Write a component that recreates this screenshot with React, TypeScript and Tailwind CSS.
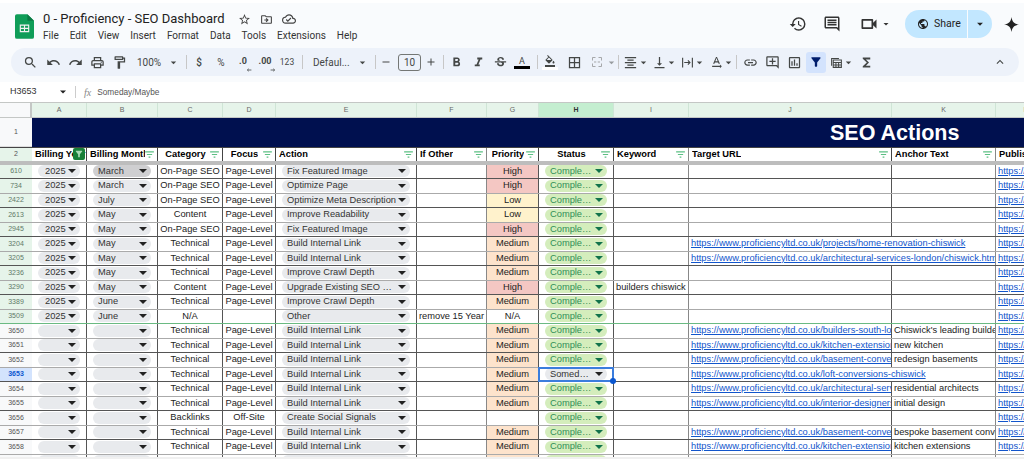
import type { ReactNode } from 'react'
import {
  MdSearch, MdUndo, MdRedo, MdOutlinePrint, MdOutlineFormatPaint, MdArrowDropDown, MdRemove, MdAdd,
  MdFormatBold, MdFormatItalic, MdStrikethroughS, MdFormatColorFill, MdBorderAll, MdFormatAlignCenter,
  MdVerticalAlignBottom, MdTextRotationNone, MdLink, MdOutlineAddComment, MdOutlineInsertChart, MdFilterAlt,
  MdFunctions, MdExpandLess, MdStarBorder, MdOutlineDriveFileMove, MdOutlineCloudDone, MdHistory,
  MdOutlineComment, MdOutlineVideocam, MdPublic,
} from 'react-icons/md'

const cols = ['A', 'B', 'C', 'D', 'E', 'F', 'G', 'H', 'I', 'J', 'K', 'L']
const base = 'https://www.proficiencyltd.co.uk/'

type Row = {
  n: string
  y?: string
  m?: string
  cat: string
  focus?: string
  action: string
  other?: string
  pri?: string
  status?: string
  kw?: string
  url?: string
  anchor?: string
}

const rows: Row[] = [
  { n: '610', y: '2025', m: 'March', cat: 'On-Page SEO', action: 'Fix Featured Image', pri: 'High' },
  { n: '734', y: '2025', m: 'March', cat: 'On-Page SEO', action: 'Optimize Page', pri: 'High' },
  { n: '2422', y: '2025', m: 'July', cat: 'On-Page SEO', action: 'Optimize Meta Description', pri: 'Low' },
  { n: '2613', y: '2025', m: 'May', cat: 'Content', action: 'Improve Readability', pri: 'Low' },
  { n: '2945', y: '2025', m: 'May', cat: 'On-Page SEO', action: 'Fix Featured Image', pri: 'High' },
  { n: '3204', y: '2025', m: 'May', cat: 'Technical', action: 'Build Internal Link', pri: 'Medium', url: 'projects/home-renovation-chiswick' },
  { n: '3205', y: '2025', m: 'May', cat: 'Technical', action: 'Build Internal Link', pri: 'Medium', url: 'architectural-services-london/chiswick.html' },
  { n: '3236', y: '2025', m: 'May', cat: 'Technical', action: 'Improve Crawl Depth', pri: 'Medium' },
  { n: '3290', y: '2025', m: 'May', cat: 'Content', action: 'Upgrade Existing SEO Content', pri: 'High', kw: 'builders chiswick' },
  { n: '3389', y: '2025', m: 'June', cat: 'Technical', action: 'Improve Crawl Depth', pri: 'Medium' },
  { n: '3509', y: '2025', m: 'June', cat: 'N/A', focus: '', action: 'Other', other: 'remove 15 Year', pri: 'N/A' },
  { n: '3650', cat: 'Technical', action: 'Build Internal Link', pri: 'Medium', url: 'builders-south-london', anchor: "Chiswick's leading builders" },
  { n: '3651', cat: 'Technical', action: 'Build Internal Link', pri: 'Medium', url: 'kitchen-extensions-london', anchor: 'new kitchen' },
  { n: '3652', cat: 'Technical', action: 'Build Internal Link', pri: 'Medium', url: 'basement-conversions-london', anchor: 'redesign basements' },
  { n: '3653', cat: 'Technical', action: 'Build Internal Link', pri: 'Medium', status: 'Someday/Maybe', url: 'loft-conversions-chiswick' },
  { n: '3654', cat: 'Technical', action: 'Build Internal Link', pri: 'Medium', url: 'architectural-services-london', anchor: 'residential architects' },
  { n: '3655', cat: 'Technical', action: 'Build Internal Link', pri: 'Medium', url: 'interior-designers-london', anchor: 'initial design' },
  { n: '3656', cat: 'Backlinks', focus: 'Off-Site', action: 'Create Social Signals' },
  { n: '3657', cat: 'Technical', action: 'Build Internal Link', pri: 'Medium', url: 'basement-conversions-london', anchor: 'bespoke basement conversions' },
  { n: '3658', cat: 'Technical', action: 'Build Internal Link', pri: 'Medium', url: 'kitchen-extensions-london', anchor: 'kitchen extensions' },
  { n: '3659', cat: '', focus: '', action: '', pri: 'Medium' },
]

const grid = 'grid grid-cols-[32px_55px_71px_65px_53px_141px_70px_52px_75px_75px_203px_104px_60px]'

function Caret({ className = '' }: { className?: string }) {
  return <span className={`ml-auto h-0 w-0 shrink-0 border-x-[4px] border-t-[4px] border-x-transparent border-t-[#222] ${className}`} />
}

function Chip({ label, active, green, wide, tight }: { label?: string; active?: boolean; green?: boolean; wide?: boolean; tight?: boolean }) {
  return (
    <div className={`flex h-[12px] w-full items-center rounded-full pr-[4px] leading-none ${wide ? 'pl-[7px]' : 'pl-[5px]'} ${green ? 'bg-[#d4edbc] text-[#2f8f57]' : active ? 'bg-[#cfcfd1] text-[#333]' : 'bg-[#e8eaed] text-[#333]'}`}>
      <span className={`truncate ${tight ? 'pr-[2px]' : 'pr-[1px]'}`}>{label}</span>
      <Caret className={green ? 'border-t-[#11734b]' : ''} />
    </div>
  )
}

function FilterIcon() {
  return (
    <svg viewBox="0 0 10 8" className="absolute right-[3px] top-[3px] h-[7px] w-[9px] stroke-[#5cc084] stroke-[1.2]">
      <path d="M0 1h10M2 4h6M4 7h2" />
    </svg>
  )
}

function Head({ label, center, line = 'border-[#444]' }: { label: string; center?: boolean; line?: string }) {
  return (
    <div className={`relative flex items-center overflow-hidden border-r bg-white pl-[3px] pr-[12px] text-[9.3px] font-bold text-black ${line} ${center ? 'justify-center' : ''}`}>
      <span className="overflow-hidden whitespace-nowrap pt-[1px]">{label}</span>
      <FilterIcon />
    </div>
  )
}

// one 22px toolbar button
function Tb({ children, className = '' }: { children: ReactNode; className?: string }) {
  return <span className={`flex h-[20px] w-[22px] shrink-0 items-center justify-center text-[#444746] ${className}`}>{children}</span>
}

function Ic({ children, className = '' }: { children: ReactNode; className?: string }) {
  return <Tb className={`text-[15px] ${className}`}>{children}</Tb>
}

function Sep({ className = '' }: { className?: string }) {
  return <span className={`h-[14px] w-px shrink-0 bg-[#c7c7c7] ${className}`} />
}

function Drop({ className = '' }: { className?: string }) {
  return <MdArrowDropDown className={`shrink-0 text-[13px] text-[#444746] ${className}`} />
}

function DecArrow({ flip }: { flip?: boolean }) {
  return (
    <svg viewBox="0 0 6 5" className="absolute -bottom-[3px] -right-[5px] h-[4px] w-[6px] fill-none stroke-[#444746] stroke-[1]">
      {flip ? <path d="M0 2.5h5M3.4 1L5 2.5 3.4 4" /> : <path d="M6 2.5H1M2.6 1L1 2.5 2.6 4" />}
    </svg>
  )
}

export default function App() {
  return (
    <div className="h-[459px] w-[1024px] overflow-hidden bg-white font-['Liberation_Sans',Arial,sans-serif] text-[#222]">
      <div className="h-[3px] bg-white" />
      <div className="h-[79px] bg-[#f9fbfd]">
        <div className="flex h-[45px] items-start pl-[15px]">
          <svg viewBox="0 0 20 26" className="mt-[11px] h-[25px] w-[19px] shrink-0">
            <path d="M2 0h11l7 7v17a2 2 0 0 1-2 2H2a2 2 0 0 1-2-2V2a2 2 0 0 1 2-2z" fill="#0f9d58" />
            <path d="M13 0l7 7h-7z" fill="#0b7a44" />
            <path d="M5 11h10v8H5z M6.2 12.2v2.2h3.2v-2.2z M10.6 12.2v2.2h3.2v-2.2z M6.2 15.6v2.2h3.2v-2.2z M10.6 15.6v2.2h3.2v-2.2z" fill="#f1f1f1" fillRule="evenodd" />
          </svg>
          <div className="ml-[9px] flex flex-col">
            <div className="mt-[4px] flex h-[24px] items-center text-[#222]">
              <span className="font-['Roboto',sans-serif] text-[13px]">0 - Proficiency - SEO Dashboard</span>
              <MdStarBorder className="ml-[13px] text-[13px] text-[#444]" />
              <MdOutlineDriveFileMove className="ml-[9px] text-[13px] text-[#444]" />
              <MdOutlineCloudDone className="ml-[9px] text-[14px] text-[#444]" />
            </div>
            <div className="-mt-[3px] flex gap-[11px] font-['Roboto',sans-serif] text-[10px] text-[#333]">
              <span>File</span><span>Edit</span><span>View</span><span>Insert</span><span>Format</span><span>Data</span><span>Tools</span><span>Extensions</span><span>Help</span>
            </div>
          </div>
          <div className="ml-auto mr-[5.5px] mt-[7px] flex items-center">
            <MdHistory className="text-[18px] text-[#333]" />
            <MdOutlineComment className="ml-[16px] text-[18px] text-[#333]" />
            <MdOutlineVideocam className="ml-[18px] text-[20px] text-[#333]" />
            <MdArrowDropDown className="ml-[1px] text-[12px] text-[#333]" />
            <div className="ml-[13px] flex h-[28px] w-[87px] items-center rounded-full bg-[#c2e7ff] font-['Roboto',sans-serif] text-[10.5px] text-[#222]">
              <MdPublic className="ml-[12px] text-[12px]" />
              <span className="ml-[5px]">Share</span>
              <span className="ml-[6px] h-full w-px bg-[#f9fbfd]" />
              <MdArrowDropDown className="ml-[5px] text-[14px]" />
            </div>
            <svg viewBox="0 0 24 24" className="ml-[11.5px] h-[15px] w-[15px] fill-[#222]">
              <path d="M12 0c1 7 4 11 12 12-8 1-11 5-12 12-1-7-4-11-12-12 8-1 11-5 12-12z" />
            </svg>
          </div>
        </div>
        <div className="ml-[11px] mr-[5px] flex h-[28px] items-center rounded-full bg-[#edf2fa] pl-[8px] pr-[12px] font-['Roboto',sans-serif] text-[10px] text-[#444746]">
          <Ic><MdSearch /></Ic>
          <Ic className="ml-[1px]"><MdUndo /></Ic>
          <Ic><MdRedo /></Ic>
          <Ic><MdOutlinePrint /></Ic>
          <Ic><MdOutlineFormatPaint /></Ic>
          <span className="ml-[7px] w-[25px]">100%</span>
          <Drop className="ml-[5px]" />
          <Sep className="ml-[6px]" />
          <Tb className="ml-[1px] text-[10px] font-medium">$</Tb>
          <Tb className="text-[10px]">%</Tb>
          <Tb><span className="relative text-[9px] font-bold">.0<DecArrow /></span></Tb>
          <Tb><span className="relative text-[9px] font-bold">.00<DecArrow flip /></span></Tb>
          <Tb className="text-[8.5px]">123</Tb>
          <Sep className="ml-[4px]" />
          <span className="ml-[10px] w-[37px] whitespace-nowrap">Defaul...</span>
          <Drop className="ml-[5.5px]" />
          <Sep className="ml-[6.5px]" />
          <MdRemove className="ml-[4px] text-[12px]" />
          <span className="ml-[6px] flex h-[17px] w-[23px] items-center justify-center rounded-[3px] border border-[#747775] text-[10px]">10</span>
          <MdAdd className="ml-[4px] text-[12px]" />
          <Sep className="ml-[6px]" />
          <Ic className="ml-[1px]"><MdFormatBold /></Ic>
          <Ic><MdFormatItalic /></Ic>
          <Ic><MdStrikethroughS /></Ic>
          <Tb><span className="flex w-[16px] flex-col items-center text-[9px] leading-[10px]">A<span className="h-[3px] w-full bg-black" /></span></Tb>
          <Sep className="ml-[4px]" />
          <Tb className="ml-[1px]"><span className="flex w-[16px] flex-col items-center"><MdFormatColorFill className="text-[12px]" /><span className="h-[3px] w-full bg-white" /></span></Tb>
          <Ic className="ml-[2px]"><MdBorderAll /></Ic>
          <Ic className="ml-[1px]">
            <svg viewBox="0 0 16 16" className="h-[12px] w-[12px] fill-none stroke-[#a4a6a8] stroke-[1.3]"><path d="M2 6V2h4M10 2h4v4M2 10v4h4M10 14h4v-4M4 8h3M9 8h3" /></svg>
          </Ic>
          <Drop className="-ml-[3.5px] opacity-50" />
          <Sep className="ml-[0.5px]" />
          <Ic><MdFormatAlignCenter /></Ic>
          <Drop className="-ml-[4.5px]" />
          <Ic className="-ml-[1.5px]"><MdVerticalAlignBottom /></Ic>
          <Drop className="-ml-[5.5px]" />
          <Ic className="-ml-[1.5px]"><svg viewBox="0 0 16 16" className="h-[13px] w-[13px] fill-none stroke-[#444746] stroke-[1.4]"><path d="M2 2v12M14 2v12M4 8h7M8.5 5.5L11 8l-2.5 2.5" /></svg></Ic>
          <Drop className="-ml-[5.5px]" />
          <Ic className="-ml-[0.5px]"><MdTextRotationNone /></Ic>
          <Drop className="-ml-[5.5px]" />
          <Sep className="ml-[1.5px]" />
          <Ic className="ml-[2px]"><MdLink /></Ic>
          <Ic><MdOutlineAddComment /></Ic>
          <Ic><MdOutlineInsertChart /></Ic>
          <span className="ml-[1px] flex h-[21px] w-[20px] shrink-0 items-center justify-center rounded-[3px] bg-[#d3e3fd]"><MdFilterAlt className="text-[14px] text-[#001d6c]" /></span>
          <Ic className="-ml-[1px]"><svg viewBox="0 0 16 16" className="h-[13px] w-[13px] fill-none stroke-[#444746] stroke-[1.3]"><path d="M2 12V3h9M4 14V5h10v9zM4 8h10M4 11h10M7.3 8v6M10.6 8v6" /></svg></Ic>
          <Drop className="-ml-[5.5px]" />
          <Ic className="ml-[0.5px]"><MdFunctions /></Ic>
          <MdExpandLess className="ml-auto text-[14px]" />
        </div>
      </div>

      <div className="flex h-[20px] items-center bg-white text-[#333]">
        <span className="ml-[10px] w-[49px] text-[9px]">H3653</span>
        <Caret className="!ml-0 scale-75" />
        <span className="ml-[8px] h-[12px] w-px bg-[#ccc]" />
        <span className="ml-[8px] font-['Liberation_Serif',serif] text-[10px] italic text-[#888]">fx</span>
        <span className="ml-[6px] text-[8.3px] text-[#555]">Someday/Maybe</span>
      </div>

      <div className={`${grid} h-[16px] border-y border-[#c4c7c5] bg-[#e6f4ea] text-[7px] text-[#666]`}>
        <div className="border-r-2 border-[#c4c7c5] bg-[#f8f9fa]" />
        {cols.map(c => (
          <div key={c} className={`flex items-center justify-center border-r border-[#cfe5d6] pt-[1px] ${c === 'H' ? 'bg-[#c4eed0] font-bold text-[#333]' : ''}`}>{c}</div>
        ))}
      </div>

      <div className={`${grid} h-[29px]`}>
        <div className="flex items-center justify-center border-b border-[#ddd] bg-[#f8f9fa] text-[7px] text-[#555]">1</div>
        <div className="relative col-span-12 overflow-hidden bg-[#00104f]">
          <span className="absolute left-[798px] -top-[1px] whitespace-nowrap text-[21.5px] font-bold text-white">SEO Actions</span>
        </div>
      </div>

      <div className={`${grid} h-[14px] border-t border-[#444]`}>
        <div className="flex items-center justify-center bg-[#e6f4ea] text-[7px] text-[#555]">2</div>
        <div className="relative flex items-center overflow-hidden border-r border-[#444] bg-white px-[3px] text-[9.3px] font-bold text-black">
          <span className="whitespace-nowrap pt-[1px]">Billing Year</span>
          <span className="absolute right-[1px] top-0 flex h-[12px] w-[12px] items-center justify-center rounded-[2px] bg-[#188038]"><MdFilterAlt className="text-[10px] text-[#a8dab5]" /></span>
        </div>
        <Head label="Billing Month" />
        <Head label="Category" center />
        <Head label="Focus" center />
        <Head label="Action" />
        <Head label="If Other" line="border-[#888]" />
        <Head label="Priority" center />
        <Head label="Status" center />
        <Head label="Keyword" line="border-[#888]" />
        <Head label="Target URL" />
        <Head label="Anchor Text" line="border-[#888]" />
        <Head label="Published URL" />
      </div>
      <div className="h-[3.5px] bg-[#bdbdbd]" />

      <div className="h-[292.5px] overflow-hidden">
        {rows.map((r, i) => {
          const sel = r.n === '3653'
          const last = i === rows.length - 1
          const pri = r.pri === 'High' ? 'bg-[#f4c7c3]' : r.pri === 'Low' ? 'bg-[#fff2cc]' : r.pri === 'Medium' ? 'bg-[#fde3cc]' : 'bg-white'
          const rule = i === 10 ? 'border-[#6aba82]' : i % 2 === 0 ? 'border-[#555]' : 'border-[#aaa]'
          const head = sel ? 'bg-[#d3e3fd] font-bold text-[#0b57d0]' : i <= 10 ? 'bg-[#e6f4ea] text-[#5f7a68]' : 'bg-[#f8f9fa] text-[#555]'
          return (
            <div key={r.n} className={`${grid} h-[14.5px] border-b text-[9.3px] ${rule}`}>
              <div className={`flex items-center justify-center text-[7px] ${head}`}>{r.n}</div>
              <div className="flex items-center border-r border-[#555] px-[6px]"><Chip label={r.y} wide /></div>
              <div className="flex items-center border-r border-[#555] px-[6px]"><Chip label={r.m} active={i === 0} /></div>
              <div className="flex items-center justify-center overflow-hidden whitespace-nowrap border-r border-[#555]">{r.cat}</div>
              <div className="flex items-center justify-center overflow-hidden whitespace-nowrap border-r border-[#555]">{last ? '' : r.focus ?? 'Page-Level'}</div>
              <div className="flex items-center border-r border-[#555] px-[6px]"><Chip label={r.action} /></div>
              <div className="flex items-center overflow-hidden whitespace-nowrap border-r border-[#888] px-[2px]">{r.other}</div>
              <div className={`flex items-center justify-center border-r border-[#555] ${pri}`}>{r.pri}</div>
              <div className="relative flex items-center border-r border-[#555] px-[6px]">
                {sel ? <Chip label="Someday/Maybe" tight /> : <Chip label="Completed" green tight />}
                {sel && (
                  <>
                    <span className="absolute -inset-x-px -inset-y-px border-2 border-[#3b7ddd]" />
                    <span className="absolute -bottom-[3px] -right-[3px] z-10 h-[6px] w-[6px] rounded-full bg-[#0b57d0]" />
                  </>
                )}
              </div>
              <div className="flex items-center overflow-hidden whitespace-nowrap border-r border-[#888] px-[2px]">{r.kw}</div>
              {r.url && !r.anchor ? (
                <div className="col-span-2 flex items-center overflow-hidden whitespace-nowrap border-r border-[#888] px-[2px] text-[#1155cc] underline">{base + r.url}</div>
              ) : (
                <>
                  <div className="flex items-center overflow-hidden whitespace-nowrap border-r border-[#555] px-[2px] text-[#1155cc] underline">{r.url ? base + r.url : ''}</div>
                  <div className="flex items-center overflow-hidden whitespace-nowrap border-r border-[#888] px-[2px]">{r.anchor}</div>
                </>
              )}
              <div className="flex items-center overflow-hidden whitespace-nowrap px-[2px] text-[#1155cc] underline">https://www.proficiencyltd.co.uk/</div>
            </div>
          )
        })}
      </div>
      <div className="h-[2px] bg-[#f0f0f0]" />
    </div>
  )
}
